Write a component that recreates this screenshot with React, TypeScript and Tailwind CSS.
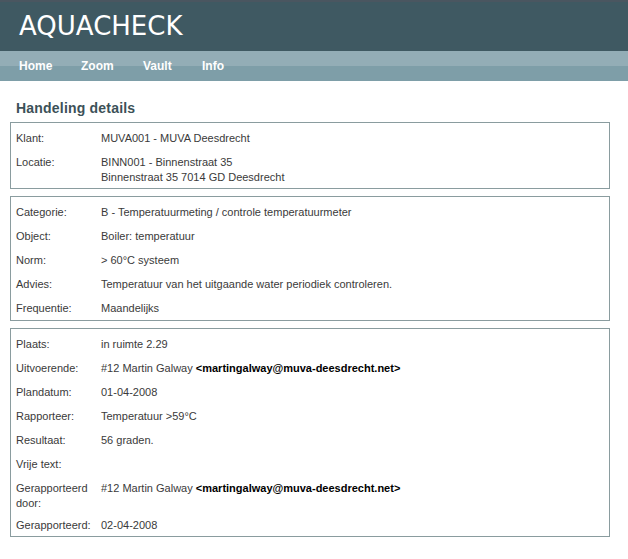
import React from 'react'

type Row = { label: string; value: React.ReactNode; pb?: string }

const Email = ({ addr }: { addr: string }) => (
  <b className="font-bold text-black">&lt;{addr}&gt;</b>
)

const klant: Row[] = [
  { label: 'Klant:', value: 'MUVA001 - MUVA Deesdrecht' },
  {
    label: 'Locatie:',
    pb: 'pb-[3px]',
    value: (
      <>
        BINN001 - Binnenstraat 35
        <br />
        Binnenstraat 35 7014 GD Deesdrecht
      </>
    ),
  },
]

const categorie: Row[] = [
  { label: 'Categorie:', value: 'B - Temperatuurmeting / controle temperatuurmeter' },
  { label: 'Object:', value: 'Boiler: temperatuur' },
  { label: 'Norm:', value: '> 60°C systeem' },
  { label: 'Advies:', value: 'Temperatuur van het uitgaande water periodiek controleren.' },
  { label: 'Frequentie:', value: 'Maandelijks' },
]

const uitvoering: Row[] = [
  { label: 'Plaats:', value: 'in ruimte 2.29' },
  {
    label: 'Uitvoerende:',
    value: (
      <>
        #12 Martin Galway <Email addr="martingalway@muva-deesdrecht.net" />
      </>
    ),
  },
  { label: 'Plandatum:', value: '01-04-2008' },
  { label: 'Rapporteer:', value: 'Temperatuur >59°C' },
  { label: 'Resultaat:', value: '56 graden.' },
  { label: 'Vrije text:', value: '' },
  {
    label: 'Gerapporteerd door:',
    pb: 'pb-[2px]',
    value: (
      <>
        #12 Martin Galway <Email addr="martingalway@muva-deesdrecht.net" />
      </>
    ),
  },
  { label: 'Gerapporteerd:', value: '02-04-2008', pb: 'pb-[3px]' },
]

const DetailBox = ({ rows }: { rows: Row[] }) => (
  <div className="border border-[#8a9c9f] pt-[3px] pl-[5px]">
    {rows.map((r) => (
      <div key={r.label} className={`flex pt-[5px] leading-[15px] ${r.pb ?? 'pb-[4px]'}`}>
        <div className="w-[85px] shrink-0 pr-1">{r.label}</div>
        <div>{r.value}</div>
      </div>
    ))}
  </div>
)

export default function App() {
  return (
    <div className="w-[628px] min-h-[559px] bg-white font-['Liberation_Sans',Arial,sans-serif] text-[11px] text-[#3a3a3a]">
      <header className="h-[51px] bg-[#3f5962] border-t-2 border-[#4a5660]">
        <h1 className="pl-[19px] pt-[9px] text-[26px] leading-[30px] font-normal text-white font-['DejaVu_Sans',sans-serif]">
          AQUACHECK
        </h1>
      </header>
      <nav className="h-[30px] bg-[linear-gradient(#93adb6_0,#93adb6_50%,#7e9ea8_50%,#7e9ea8_100%)] flex items-center pl-[19px] gap-[30px] text-[12px] font-bold text-white font-['Liberation_Sans',Arial,sans-serif]">
        <span className="w-[32px]">Home</span>
        <span className="w-[32px]">Zoom</span>
        <span className="w-[29px]">Vault</span>
        <span>Info</span>
      </nav>
      <main className="pl-[10px] pr-[18px] pt-[19px]">
        <h2 className="pl-[6px] pb-[6px] text-[14px] leading-[16px] font-bold tracking-[0.2px] text-[#3c5158] font-['Liberation_Sans',Arial,sans-serif]">
          Handeling details
        </h2>
        <div className="flex flex-col gap-[7px]">
          <DetailBox rows={klant} />
          <DetailBox rows={categorie} />
          <DetailBox rows={uitvoering} />
        </div>
      </main>
    </div>
  )
}
